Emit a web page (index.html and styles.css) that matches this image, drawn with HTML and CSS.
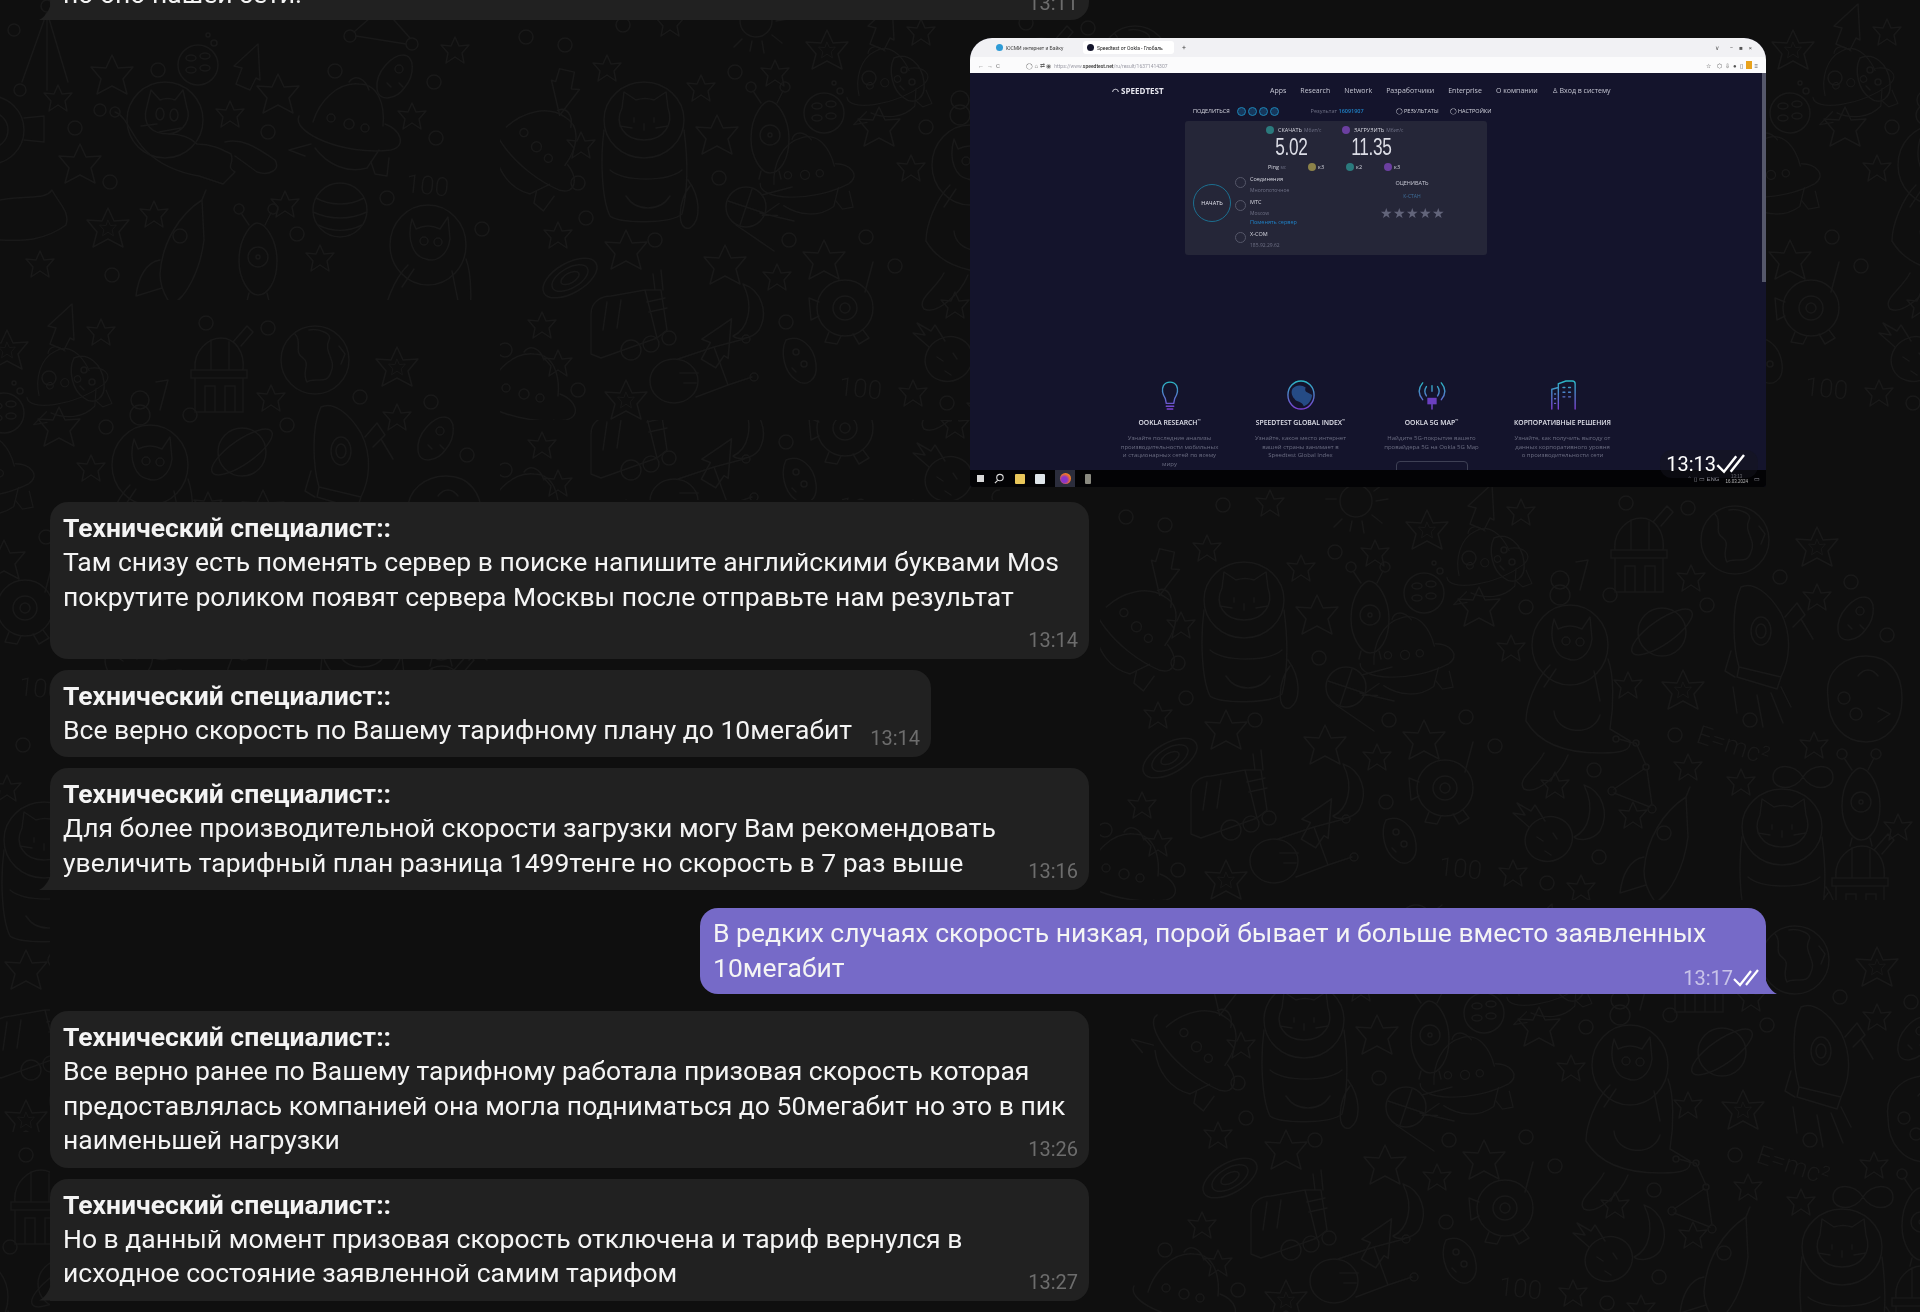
FILE: index.html
```html
<!DOCTYPE html>
<html lang="ru">
<head>
<meta charset="utf-8">
<title>Чат</title>
<link rel="stylesheet" href="styles.css">
</head>
<body>
<svg class="wall" width="1920" height="1312" aria-hidden="true">
  <defs>
    <path id="st" d="M0-20 6-7 21-8 11 4 15 19 0 11-15 19-11 4-21-8-6-7Z"/>
    <path id="st2" d="M0-13 4-4 14-5 7 3 9 13 0 7-9 13-7 3-14-5-4-4Z"/>
    <g id="st3"><use href="#st"/><use href="#st2" transform="scale(.6)"/></g>
    <g id="cat"><circle r="38"/><path d="M-18-14-14-30-5-20C0-22 5-22 10-20L18-30 22-12C26-2 20 12 4 14-12 14-24 6-18-14Z"/><ellipse cx="-5" cy="-6" rx="4" ry="6"/><ellipse cx="9" cy="-5" rx="4" ry="6"/><path d="M-24 6-8 4M-6 12 16 8M-50-8C-38-4-34 16-20 30-6 44 10 52 34 56L58 64 70 52C60 46 70 44 66 34 58 30 48 24 32 24 24 16 14 14 4 14M60 22C76 18 90 26 110 40 116 50 104 56 92 52L70 36"/><circle cx="-50" cy="-8" r="5"/></g>
    <g id="catf"><ellipse rx="40" ry="38"/><path d="M-22-12-20-28-8-20C-2-22 4-22 10-20L22-28 24-12C30 4 20 20 0 20-20 20-30 4-22-12Z"/><path d="M-10-2-10 2M10-2 10 2M0 4 0 10M-24 6-12 8M24 6 12 8"/><path d="M-40 10C-44 40-42 80-34 96-24 104 26 104 38 94 44 70 44 40 40 10M-34 50C-20 62 24 62 38 50M-18 76C-8 92 16 92 26 76M44 60C56 76 58 100 46 108 32 112 34 80 46 66"/></g>
    <g id="cats"><ellipse rx="38" ry="40"/><path d="M-16-26-12-16C-4-20 4-20 12-16L20-28 22-6C20 10 8 18-2 14-14 12-22-4-16-26Z"/><circle cx="-4" cy="-4" r="4"/><circle cx="10" cy="-3" r="4"/><path d="M-20 20C-34 34-44 60-44 76-30 100-2 108 30 108 50 108 62 106 60 96L40 84C44 60 44 30 38 14M-16 66C-14 90 24 92 30 70M-26 42-14 24M24 26 30 56"/><path d="M-2 110C-10 130-34 150-46 144-54 134-34 124-26 108"/></g>
    <g id="ufo"><path d="M-32-8C-26-28-8-48 14-46 34-46 40-24 38-4"/><path d="M-46-14C-54 2-2 26 46 20 62 16 56 0 40-6M-30 18C-18 34 2 44 22 38L34 20"/><path d="M4-48C10-56 20-52 24-40"/><circle cx="-14" cy="-12" r="4"/><circle cx="4" cy="-6" r="5"/><circle cx="20" cy="-2" r="4"/><path d="M-34 14-56 20-40 26M26 32 30 44 42 46 44 28"/></g>
    <g id="planet"><circle r="27"/><path d="M-24-12C-10-4 10-4 24-12M-27 2C-10 10 10 10 27 2M-22 15C-8 22 8 22 22 15"/></g>
    <g id="rocket"><path d="M32-60C10-46-8-18-10 14-10 28-4 38 2 46 16 36 30 12 34-20ZM-10 0C-24 2-32 18-34 36L-8 28M2 46 12 36"/><circle cx="10" cy="-24" r="7"/><path d="M32-60 36-70"/></g>
    <g id="rocket2"><path d="M-18-50C-28-30-26 10-20 30L22 40C30 24 34 0 22-24 10-44-6-56-18-50ZM-20 30-22 40 18 52 22 40"/><ellipse cx="2" cy="-6" rx="10" ry="14"/><ellipse cx="2" cy="-6" rx="5" ry="7"/><path d="M26-20 38-34 46-22 34-10M42-18 54 2M-28 14-34 34-24 40M-26 50-22 76M-2 58 4 90M12 56 24 86M22 50 32 70"/></g>
    <g id="alien"><path d="M-16 6C-16-20-2-32 2-32 10-32 22-16 22 6 22 28 12 40 3 40-6 40-16 24-16 6Z"/><circle cx="3" cy="2" r="10"/><circle cx="3" cy="2" r="2"/><path d="M-6-30-14-42M10-30 16-42"/><circle cx="-16" cy="-46" r="5"/><circle cx="18" cy="-46" r="5"/><path d="M-6 38-8 46M12 38 14 46"/></g>
    <g id="tri"><path d="M-3-38-28 32M-3-38 18 32M-3-38-3 40"/><circle cx="-3" cy="-44" r="6"/><path d="M2-42 20-32 30-36 26-46 14-46"/></g>
    <g id="moon"><circle r="20"/><ellipse cx="-7" cy="-7" rx="5" ry="3"/><ellipse cx="7" cy="-9" rx="5" ry="3"/><ellipse cx="-7" cy="5" rx="5" ry="3"/><ellipse cx="7" cy="3" rx="5" ry="3"/><circle cx="16" cy="-22" r="3"/><circle cx="10" cy="-30" r="2"/></g>
    <g id="plane"><path d="M10-26-14-4-6-2-12 14 2 20 8 8 12 10Z"/></g>
    <g id="saturn"><circle r="24"/><ellipse rx="36" ry="12" transform="rotate(-35)"/></g>
    <g id="earth"><circle r="34"/><path d="M-20-26C-12-18-22-8-12-2-4 4-14 12-8 22 0 16 12 26 16 12 22 0 8-8 14-20 18-26 4-32-6-30M24-14 30-6 26 4"/></g>
    <g id="obs"><path d="M-24-2C-26-22-10-34 2-34 16-34 26-20 24-2ZM-28-2H28V6H-28ZM-24 6V40H24V6M-14 14H-4V40H-14ZM6 14H16V40H6ZM-8-32V-2M10-30V-2M14-30 28-46 34-40 22-26"/></g>
    <g id="sun"><circle cy="-6" r="16"/><path d="M-14 12-22 20M-4 14-6 24M6 14 8 26M16 8 26 16M20-6 32-8M18-16 26-22M-20-8-30-8"/></g>
    <g id="gal"><ellipse rx="30" ry="15" transform="rotate(-30)"/><ellipse rx="20" ry="10" transform="rotate(-30)"/><ellipse rx="10" ry="5" transform="rotate(-30)"/></g>
    <g id="rover"><path d="M-40 34V-6C-40-18-30-24-20-24L14-30 26 18-30 38ZM14-30 30-30 36 10 26 18M16-18 34-22M18-8 36-12M24-30 22-46M32-30 30-50"/><circle cx="0" cy="30" r="10"/><circle cx="20" cy="24" r="8"/><circle cx="38" cy="18" r="7"/><path d="M-24-18-28 10M-10-20-14 8"/></g>
    <g id="cres"><path d="M-8-28C10-22 18 0 8 18 0 28-14 28-18 24-4 18 4-4-8-28Z"/></g>
    <g id="con"><circle cx="-28" cy="-18" r="3"/><circle cx="-8" cy="-14" r="3"/><circle cx="2" cy="10" r="3"/><circle cx="-32" cy="34" r="4"/><circle cx="8" cy="52" r="4"/><path d="M-25-18-11-14-8-14 2 8M0 12-30 32M-30 36 6 50M3 13 8 48"/></g>
    <g id="sat"><circle r="20"/><path d="M-18-6 18 6M6-18-6 18M16-12 46-20M14 6 48 14M-10 18 28 44"/></g>
    <g id="eye"><circle r="28"/><circle r="12"/><circle r="5"/><path d="M20-16 28-46M-26-6-36-10-34 12-26 8M-16 24-20 34-8 36-4 28M8 26 14 36 24 30 18 22"/></g>
    <g id="pot"><path d="M-14-20C0-26 14-14 16 4 18 20 6 28-4 20-16 12-20-8-14-20Z"/><circle cx="-4" cy="-8" r="3"/><circle cx="4" cy="4" r="3"/><path d="M-8 8-4 12"/></g>
    <g id="comet"><ellipse cx="8" cy="6" rx="24" ry="22" transform="rotate(-25)"/><path d="M-10-10-26-24-14-22-22-34-8-26-4-32 6-16M-2 0 4 4M14-4 18 2M6 14 12 18"/></g>
    <g id="inf"><path d="M0 0C-8-14-30-14-30 0-30 14-8 14 0 0 8-14 30-14 30 0 30 14 8 14 0 0Z"/></g>
    <g id="tel"><ellipse cx="-30" cy="8" rx="24" ry="22"/><path d="M-26-14 10-26 24 12-8 24M-24 0-6 0M-20 10-8 10M10-26 40-34M24 12 48 4"/><circle cx="42" cy="-34" r="4"/><circle cx="50" cy="4" r="4"/></g>
    <g id="face"><path d="M-36 0C-40-30-16-42 2-42 26-42 38-24 38 0 38 30 20 44 2 44-20 44-36 26-36 0Z"/><circle cx="-20" cy="0" r="6"/><circle cx="-8" cy="16" r="6"/><path d="M-6-22C0-30 8-30 14-22M14 10 26 16 14 24"/></g>
    <g id="bug"><path d="M-18 14C-20-4-2-20 8-20 20-20 20 0 10 12 2 24-16 28-18 14Z"/><circle cx="4" cy="-6" r="4"/><path d="M-8 8-4 12M4 8 8 12"/></g>
    <g id="net"><circle cx="-30" cy="-6" r="6"/><circle cx="32" cy="2" r="6"/><circle cx="2" cy="-34" r="4"/><path d="M-24-6 26 2M-26-10-2-31M6-31 30-4"/></g>

    <g id="fieldA" class="ink">
      <use href="#cat" x="165" y="120"/><use href="#ufo" x="345" y="130"/><use href="#planet" x="340" y="210"/>
      <use href="#rocket" x="170" y="260"/><use href="#alien" x="255" y="255"/><use href="#tri" x="50" y="50"/>
      <use href="#moon" x="198" y="65"/><use href="#plane" x="248" y="70"/><use href="#net" x="380" y="42"/>
      <use href="#bug" x="395" y="75"/><use href="#cats" x="428" y="245"/>
      <use href="#st" x="112" y="75"/><use href="#st2" x="58" y="98"/><use href="#st" x="278" y="94"/><use href="#st2" x="230" y="114"/>
      <use href="#st" x="80" y="164"/><use href="#st3" x="108" y="228"/><use href="#st2" x="154" y="214"/><use href="#st2" x="285" y="204"/>
      <use href="#st2" x="412" y="116"/><use href="#st2" x="40" y="264"/><use href="#st2" x="320" y="258"/><use href="#st2" x="455" y="50"/>
      <circle cx="14" cy="30" r="6"/><circle cx="158" cy="70" r="7"/><circle cx="335" cy="71" r="7"/><circle cx="20" cy="90" r="6"/><circle cx="100" cy="110" r="6"/><circle cx="75" cy="128" r="7"/><circle cx="268" cy="132" r="7"/><circle cx="110" cy="182" r="7"/><circle cx="436" cy="138" r="7"/><circle cx="387" cy="198" r="7"/><circle cx="297" cy="234" r="7"/><circle cx="482" cy="229" r="7"/><circle cx="112" cy="275" r="7"/><circle cx="434" cy="82" r="7"/>
      <g transform="translate(-10 130)"><circle r="34"/><circle r="18"/><path d="M34-12 54-14V12L34 10"/></g>
      <path d="M0 200C30 195 45 200 52 190 60 205 70 212 66 225 40 244 14 240 0 240"/>
      <text class="glyph" x="405" y="192" transform="rotate(6 405 192)">100</text>
    </g>

    <g id="fieldB" class="ink">
      <use href="#catf" x="144" y="120"/><use href="#cats" x="470" y="165"/>
      <use href="#ufo" x="30" y="150" transform="rotate(30 30 150)"/><use href="#ufo" x="471" y="50" transform="rotate(-30 471 50) scale(.8)"/><use href="#ufo" x="342" y="187" transform="rotate(-20 342 187) scale(.9)"/>
      <use href="#alien" x="267" y="133"/><use href="#moon" x="324" y="113"/><use href="#pot" x="408" y="78"/><use href="#bug" x="756" y="137"/>
      <g transform="translate(460 100)"><circle r="9"/><circle cy="15" r="10"/><path d="M16-18 28-20 20 10"/></g>
      <use href="#plane" x="382" y="30"/><use href="#plane" x="65" y="88" transform="rotate(170 65 88)"/><use href="#plane" x="800" y="90" transform="rotate(60 800 90) scale(1.4)"/><use href="#plane" x="201" y="312" transform="rotate(8 201 312) scale(1.1)"/>
      <use href="#sun" x="256" y="27"/><use href="#sat" x="246" y="207"/><use href="#gal" x="70" y="278"/><use href="#rover" x="131" y="320"/>
      <use href="#eye" x="345" y="308"/><use href="#cres" x="251" y="312"/><use href="#cres" x="492" y="333"/>
      <use href="#con" x="544" y="277"/><use href="#saturn" x="562" y="152"/><use href="#rocket2" x="659" y="157"/><use href="#earth" x="635" y="60"/><use href="#obs" x="539" y="72"/>
      <use href="#face" x="764" y="218"/><use href="#inf" x="703" y="297"/><use href="#alien" x="758" y="320"/><use href="#catf" x="682" y="347"/>
      <use href="#rocket" x="554" y="377"/><use href="#comet" x="439" y="357"/><use href="#pot" x="300" y="360"/><use href="#tel" x="204" y="373"/>
      <use href="#obs" x="760" y="400"/><use href="#ufo" x="20" y="400"/>
      <text class="glyph" x="338" y="395" transform="rotate(6 338 395)">100</text>
      <text class="glyph" x="595" y="262" transform="rotate(18 595 262)">E=mc²</text>
      <use href="#st2" x="107" y="68"/><use href="#st2" x="170" y="23"/><use href="#st2" x="201" y="88"/><use href="#st" x="217" y="135"/><use href="#st2" x="81" y="145"/><use href="#st2" x="275" y="73"/><use href="#st3" x="327" y="50"/><use href="#st" x="379" y="127"/><use href="#st2" x="421" y="32"/><use href="#st2" x="411" y="168"/><use href="#st2" x="591" y="98"/><use href="#st3" x="717" y="67"/><use href="#st2" x="717" y="117"/><use href="#st2" x="528" y="205"/><use href="#st3" x="583" y="210"/><use href="#st2" x="714" y="265"/><use href="#st2" x="588" y="287"/><use href="#st2" x="641" y="302"/><use href="#st2" x="455" y="305"/><use href="#st" x="324" y="260"/><use href="#st" x="225" y="265"/><use href="#st2" x="277" y="277"/><use href="#st" x="126" y="250"/><use href="#st2" x="58" y="235"/><use href="#st2" x="42" y="325"/><use href="#st2" x="58" y="363"/><use href="#st2" x="533" y="335"/><use href="#st2" x="798" y="347"/><use href="#st2" x="413" y="393"/><use href="#st3" x="126" y="400"/><use href="#st2" x="481" y="408"/>
      <circle cx="123" cy="25" r="7"/><circle cx="26" cy="37" r="7"/><circle cx="65" cy="45" r="7"/><circle cx="235" cy="72" r="7"/><circle cx="369" cy="78" r="7"/><circle cx="526" cy="23" r="7"/><circle cx="588" cy="28" r="7"/><circle cx="680" cy="97" r="7"/><circle cx="751" cy="102" r="7"/><circle cx="510" cy="115" r="7"/><circle cx="426" cy="127" r="7"/><circle cx="607" cy="125" r="7"/><circle cx="787" cy="155" r="7"/><circle cx="219" cy="178" r="7"/><circle cx="78" cy="183" r="7"/><circle cx="86" cy="218" r="7"/><circle cx="366" cy="237" r="7"/><circle cx="155" cy="240" r="7"/><circle cx="289" cy="240" r="7"/><circle cx="650" cy="240" r="7"/><circle cx="575" cy="255" r="7"/><circle cx="395" cy="266" r="7"/><circle cx="494" cy="290" r="7"/><circle cx="286" cy="322" r="7"/><circle cx="5" cy="350" r="7"/><circle cx="78" cy="390" r="7"/><circle cx="499" cy="377" r="7"/><circle cx="447" cy="403" r="7"/>
    </g>
  </defs>
  <rect class="wall-fill" width="1920" height="1312"/>
  <svg x="0" y="0" width="500" height="300" viewBox="0 0 500 300"><use href="#fieldA"/></svg>
  <svg x="500" y="0" width="820" height="420" viewBox="0 0 820 420"><use href="#fieldB"/></svg>
  <svg x="0" y="300" width="500" height="420" viewBox="320 0 500 420"><use href="#fieldB"/></svg>
  <svg x="500" y="420" width="500" height="80" viewBox="0 300 500 80"><use href="#fieldB"/></svg>
  <svg x="1766" y="0" width="154" height="490" viewBox="300 0 154 490"><use href="#fieldB"/></svg>
  <svg x="1100" y="480" width="820" height="420" viewBox="0 0 820 420"><use href="#fieldB"/></svg>
  <svg x="1090" y="900" width="830" height="412" viewBox="-70 0 830 412"><use href="#fieldB"/></svg>
  <svg x="0" y="720" width="50" height="412" viewBox="100 0 50 412"><use href="#fieldB"/></svg>
  <svg x="0" y="1132" width="50" height="180" viewBox="500 0 50 180"><use href="#fieldB"/></svg>
</svg>

<main class="chat">
  <div class="msg in stub tail"><p class="text">но оно нашей сети.</p><time class="stamp">13:11</time></div>

  <figure class="shot">
    <div class="shot-pic">
      <header class="tabs">
        <span class="tab"><i class="fav fav-blue"></i>ЮСМИ интернет и Байку</span>
        <span class="tab tab-on"><i class="fav fav-dark"></i>Speedtest от Ookla - Глобаль</span>
        <span class="tab-plus">+</span>
        <span class="winbtns">∨&nbsp;&nbsp;&nbsp;&nbsp;&nbsp;&nbsp;&nbsp;−&nbsp;&nbsp;&nbsp;&nbsp;■&nbsp;&nbsp;&nbsp;&nbsp;×</span>
      </header>
      <div class="urlbar">
        <span class="navbtns">←&nbsp;&nbsp;→&nbsp;&nbsp;C</span>
        <span class="url"><span class="url-ico">◯ ⌂ ⇄ ◉</span> https://www.<b>speedtest.net</b>/ru/result/16371414307</span>
        <span class="tools">☆&nbsp;&nbsp;&nbsp;&nbsp;⬡&nbsp;&nbsp;⇩&nbsp;&nbsp;●&nbsp;&nbsp;▯&nbsp;&nbsp;<i class="ext"></i>&nbsp;&nbsp;≡</span>
      </div>
      <section class="page">
        <div class="scrollbar"></div>
        <nav class="st-nav">
          <span class="st-logo">◠ SPEEDTEST</span>
          <span class="st-links"><span>Apps</span><span>Research</span><span>Network</span><span>Разработчики</span><span>Enterprise</span><span>О компании</span><span>♙ Вход в систему</span></span>
        </nav>
        <div class="st-share">
          <span class="share-l">ПОДЕЛИТЬСЯ</span>
          <i class="dot-b"></i><i class="dot-b"></i><i class="dot-b"></i><i class="dot-b"></i>
          <span class="share-r">Результат <b>16091907</b></span>
          <span class="share-t">◯ РЕЗУЛЬТАТЫ</span>
          <span class="share-t">◯ НАСТРОЙКИ</span>
        </div>
        <div class="card">
          <div class="speeds">
            <div class="speed"><div class="sp-head"><i class="disc disc-teal"></i>СКАЧАТЬ <small>Мбит/с</small></div><div class="sp-val">5.02</div></div>
            <div class="speed"><div class="sp-head"><i class="disc disc-purple"></i>ЗАГРУЗИТЬ <small>Мбит/с</small></div><div class="sp-val">11.35</div></div>
          </div>
          <div class="ping"><span>Ping <small>мс</small></span><span><i class="disc disc-gold"></i>к3</span><span><i class="disc disc-teal"></i>к2</span><span><i class="disc disc-purple"></i>к3</span></div>
          <div class="card-low">
            <div class="go">НАЧАТЬ</div>
            <div class="links">
              <div class="link-row"><i class="ring"></i><div><b>Соединения</b><small>Многопоточное</small></div></div>
              <div class="link-row"><i class="ring"></i><div><b>МТС</b><small>Moscow</small><em>Поменять сервер</em></div></div>
              <div class="link-row"><i class="ring"></i><div><b>X-COM</b><small>185.92.29.62</small></div></div>
            </div>
            <div class="rate">
              <b>ОЦЕНИВАТЬ</b><small>К-СТАН</small>
              <span class="stars">★★★★★</span>
            </div>
          </div>
        </div>
        <div class="features">
          <article class="feat">
            <svg class="feat-ico" viewBox="0 0 30 32"><defs><linearGradient id="gr" x1="0" y1="0" x2="0" y2="1"><stop offset="0" stop-color="#2bb6c4"/><stop offset="1" stop-color="#7b3fd0"/></linearGradient></defs><path class="grad" d="M10 20C7 15 6 10 8 6 11 1 19 1 22 6 24 10 23 15 20 20L19 25H11ZM11 28H19M12 31H18"/></svg>
            <h3>OOKLA RESEARCH<sup>™</sup></h3>
            <p>Узнайте последние анализы производительности мобильных и стационарных сетей по всему миру</p>
          </article>
          <article class="feat">
            <svg class="feat-ico" viewBox="0 0 30 32"><ellipse class="grad" cx="15" cy="16" rx="14" ry="15"/><path class="globe" d="M6 9C10 5 16 5 20 8 18 13 22 13 27 16 26 24 21 27 18 28 16 22 10 24 8 20 5 17 4 12 6 9Z"/></svg>
            <h3>SPEEDTEST GLOBAL INDEX<sup>™</sup></h3>
            <p>Узнайте, какое место интернет вашей страны занимает в Speedtest Global Index</p>
            <span class="feat-btn"></span>
          </article>
          <article class="feat">
            <svg class="feat-ico" viewBox="0 0 30 32"><path class="grad" d="M5 3C0 9 0 15 5 21M25 3C30 9 30 15 25 21M9 7C7 10 7 14 9 17M21 7C23 10 23 14 21 17M15 6V12M15 26V31"/><rect class="five" x="10" y="19" width="10" height="7"/></svg>
            <h3>OOKLA 5G MAP<sup>™</sup></h3>
            <p>Найдите 5G-покрытие вашего провайдера 5G на Ookla 5G Map</p>
            <span class="feat-btn"></span>
          </article>
          <article class="feat">
            <svg class="feat-ico" viewBox="0 0 30 32"><path class="grad" d="M3 31V10L10 8V31M10 31V4L18 1H25C27 1 28 2 28 4V31M15 8H17M21 8H23M15 13H17M21 13H23M15 18H17M21 18H23M6 15H7M6 20H7M6 25H7"/></svg>
            <h3>КОРПОРАТИВНЫЕ РЕШЕНИЯ</h3>
            <p>Узнайте, как получить выгоду от данных корпоративного уровня о производительности сети</p>
            <span class="feat-btn"></span>
          </article>
        </div>
      </section>
      <footer class="taskbar">
        <span class="win"></span>
        <svg class="tb-ico" viewBox="0 0 12 12"><circle class="tb-line" cx="6.5" cy="5" r="3.5"/><path class="tb-line" d="M4 8 1 11"/></svg>
        <span class="tb-app tb-yellow"></span>
        <span class="tb-app tb-white"></span>
        <span class="tb-fox"><i></i></span>
        <span class="tb-app tb-grey"></span>
        <span class="tray">⌃ ▯ ▭ ENG <small>13:13<br>16.03.2024</small> ▭</span>
      </footer>
    </div>
    <figcaption class="badge">13:13<svg class="checks" viewBox="0 0 32 18"><path d="M1 10 7 16 18 2M13 16 25 1"/></svg></figcaption>
  </figure>

  <div class="msg in w-full"><p class="name">Технический специалист::</p><p class="text">Там снизу есть поменять сервер в поиске напишите английскими буквами Mos<br>покрутите роликом появят сервера Москвы после отправьте нам результат<br>&nbsp;</p><time class="stamp">13:14</time></div>

  <div class="msg in w-short gap-s"><p class="name">Технический специалист::</p><p class="text">Все верно скорость по Вашему тарифному плану до 10мегабит</p><time class="stamp">13:14</time></div>

  <div class="msg in w-full tail gap-s"><p class="name">Технический специалист::</p><p class="text">Для более производительной скорости загрузки могу Вам рекомендовать<br>увеличить тарифный план разница 1499тенге но скорость в 7 раз выше</p><time class="stamp">13:16</time></div>

  <div class="msg out"><p class="text">В редких случаях скорость низкая, порой бывает и больше вместо заявленных<br>10мегабит</p><time class="stamp">13:17<svg class="checks checks-s" viewBox="0 0 32 18"><path d="M1 10 7 16 18 2M13 16 25 1"/></svg></time></div>

  <div class="msg in w-full gap-l"><p class="name">Технический специалист::</p><p class="text">Все верно ранее по Вашему тарифному работала призовая скорость которая<br>предоставлялась компанией она могла подниматься до 50мегабит но это в пик<br>наименьшей нагрузки</p><time class="stamp">13:26</time></div>

  <div class="msg in w-full tail gap-s"><p class="name">Технический специалист::</p><p class="text">Но в данный момент призовая скорость отключена и тариф вернулся в<br>исходное состояние заявленной самим тарифом</p><time class="stamp">13:27</time></div>
</main>
</body>
</html>
```
FILE: styles.css
```css
* { box-sizing: border-box; margin: 0; padding: 0; }
html, body { width: 1920px; height: 1312px; overflow: hidden; background: #0f0f0f; }
body { font-family: Roboto, "Liberation Sans", sans-serif; color: #fff; position: relative; }

/* wallpaper */
.wall { position: absolute; left: 0; top: 0; filter: blur(.4px); }
.wall-fill { fill: #0f0f0f; }
.ink { fill: none; stroke: #191919; stroke-width: 1.5; stroke-linejoin: round; stroke-linecap: round; }
.glyph { font-family: Roboto, sans-serif; font-size: 26px; font-weight: 300; fill: #191919; stroke: none; }

/* chat column */
.chat { position: relative; display: flex; flex-direction: column; height: 1312px; padding: 0 154px 0 50px; }
.msg { position: relative; flex: none; padding: 8px 13px 10px; border-radius: 18px; font-size: 26.5px; line-height: 34.5px; color: #f4f4f4; }
.msg p { filter: blur(.35px); }
.in { background: #212121; align-self: flex-start; }
.w-full { width: 1039px; }
.w-short { width: 881px; }
.gap-s { margin-top: 11px; }
.gap-l { margin-top: 17px; }
.name { font-weight: 700; line-height: 35px; }
.stamp { position: absolute; right: 11px; bottom: 7px; font-size: 20px; line-height: 24px; color: #6d6d6d; display: flex; align-items: center; filter: blur(.35px); }

/* message tails */
.tail { border-bottom-left-radius: 0; }
.tail::before { content: ""; position: absolute; left: -11px; bottom: 0; width: 12px; height: 20px; background: #212121; clip-path: path("M12 0C12 9 6 17 0 20H12Z"); }

.stub { width: 1039px; height: 20px; padding: 0 13px 9px; display: flex; flex-direction: column; justify-content: flex-end; border-top-left-radius: 0; border-top-right-radius: 0; }
.stub .stamp { bottom: 5px; }

.out { background: #766ac8; align-self: flex-end; width: 1066px; margin-top: 18px; border-bottom-right-radius: 0; line-height: 35px; padding: 7px 13px 9px; }
.out::after { content: ""; position: absolute; right: -11px; bottom: 0; width: 12px; height: 20px; background: #766ac8; clip-path: path("M0 0C0 9 6 17 12 20H0Z"); }
.out .stamp { color: rgba(255,255,255,.6); right: 5px; bottom: 4px; }
.checks { fill: none; stroke: #fff; stroke-width: 2.2; width: 36px; height: 20px; }
.checks-s { width: 32px; height: 18px; margin-right: -4px; }
.out + .in { margin-top: 17px; }

/* screenshot */
.shot { position: relative; flex: none; width: 796px; height: 449px; margin: 18px 0 15px; align-self: flex-end; }
.shot-pic { width: 100%; height: 100%; display: flex; flex-direction: column; border-radius: 22px 22px 3px 3px; overflow: hidden; filter: blur(.65px); background: #14142c; }
.tabs { flex: none; height: 19px; background: #f1f1f4; display: flex; align-items: center; padding: 0 14px 0 22px; font-size: 5px; color: #444; }
.tab { display: flex; align-items: center; gap: 3px; width: 91px; height: 13px; padding: 0 4px; white-space: nowrap; overflow: hidden; }
.tab-on { background: #fff; border-radius: 3px; color: #222; }
.fav { width: 7px; height: 7px; border-radius: 50%; flex: none; }
.fav-blue { background: #2e9bd6; }
.fav-dark { background: #14152c; }
.tab-plus { margin-left: 8px; font-size: 7px; }
.winbtns { margin-left: auto; color: #555; font-size: 6px; }
.urlbar { flex: none; height: 16px; background: #fbfbfc; display: flex; align-items: center; padding: 0 8px; font-size: 6px; color: #777; }
.navbtns { width: 48px; font-size: 6px; }
.url { flex: 1; color: #9a9aa5; font-size: 5px; }
.url b { color: #333; font-weight: 500; }
.url-ico { color: #666; font-size: 6px; margin-right: 2px; }
.tools { color: #555; display: flex; align-items: center; }
.ext { display: inline-block; width: 6px; height: 8px; background: #e8a21c; }

.page { flex: 1; min-height: 0; position: relative; overflow: hidden; display: flex; flex-direction: column; background: #14142c; font-family: "Open Sans", "Liberation Sans", sans-serif; color: #d5d6df; }
.scrollbar { position: absolute; right: 0; top: 0; width: 4px; height: 209px; background: #55576a; }
.st-nav { flex: none; display: flex; align-items: center; height: 14px; margin-top: 10px; padding-left: 142px; }
.st-logo { font-size: 8px; font-weight: 700; width: 158px; color: #e6e6ee; white-space: nowrap; }
.st-links { display: flex; gap: 14px; font-size: 7px; color: #c5c6d2; white-space: nowrap; }
.st-share { flex: none; display: flex; align-items: center; height: 12px; margin-top: 8px; padding-left: 223px; font-size: 5.5px; white-space: nowrap; }
.share-l { margin-right: 7px; }
.dot-b { width: 9px; height: 9px; border-radius: 50%; border: 1px solid #1d84b5; background: #16365a; margin-right: 2px; }
.share-r { margin-left: 30px; width: 85px; color: #6e7085; }
.share-r b { color: #1f82c7; font-weight: 600; }
.share-t { width: 54px; }

.card { flex: none; width: 302px; height: 134px; margin: 4px 0 0 215px; background: #252638; border-radius: 3px; padding: 4px 4px 0 8px; font-size: 5.5px; }
.speeds { display: flex; height: 34px; padding-left: 73px; gap: 26px; }
.speed { width: 50px; }
.sp-head { display: flex; align-items: center; gap: 2px; white-space: nowrap; height: 10px; }
.sp-head small { color: #6e7085; font-size: 5px; }
.sp-val { font-family: "Liberation Sans", sans-serif; font-size: 24px; line-height: 24px; transform: scaleX(.72); transform-origin: 18px 50%; font-weight: 400; color: #dcdde6; padding-left: 6px; letter-spacing: -.5px; }
.disc { display: inline-block; width: 8px; height: 8px; border-radius: 50%; margin-right: 2px; vertical-align: -2px; flex: none; }
.disc-teal { background: #2b7a7d; }
.disc-purple { background: #6b3fa0; }
.disc-gold { background: #8c8249; }
.ping { display: flex; height: 11px; margin-top: 2px; padding-left: 75px; gap: 22px; align-items: center; }
.ping small { color: #6e7085; }
.card-low { display: flex; margin-top: 3px; }
.go { width: 38px; height: 38px; border: 1.5px solid #1c6f90; border-radius: 50%; margin-top: 9px; display: flex; align-items: center; justify-content: center; font-size: 5.5px; color: #e4e4ee; flex: none; }
.links { width: 130px; margin-left: 4px; }
.link-row { display: flex; gap: 4px; margin-bottom: 3px; }
.link-row b, .link-row small, .link-row em { display: block; line-height: 9px; font-weight: 400; font-style: normal; white-space: nowrap; }
.link-row small { color: #6e7085; font-size: 5px; margin-top: 2px; }
.link-row em { color: #1f82c7; font-size: 5.5px; }
.ring { width: 11px; height: 11px; border-radius: 50%; border: 1px solid #555769; margin-top: 2px; flex: none; }
.rate { flex: 1; display: flex; flex-direction: column; align-items: center; padding-top: 4px; padding-right: 24px; }
.rate b { font-weight: 400; color: #c9cad6; }
.rate small { color: #3f6f9b; font-size: 5px; margin-top: 6px; }
.stars { color: #62647a; font-size: 13.5px; line-height: 14px; margin-top: 7px; white-space: nowrap; }

.features { margin-top: auto; flex: none; height: 90px; overflow: hidden; display: grid; grid-template-columns: repeat(4, 131px); padding-left: 134px; }
.feat { display: flex; flex-direction: column; align-items: center; text-align: center; }
.feat-ico { width: 28px; height: 30px; flex: none; }
.grad { fill: none; stroke: url(#gr); stroke-width: 1.5; stroke-linecap: round; }
.globe { fill: #254b85; stroke: none; }
.five { fill: #6b3fc0; }
.feat h3 { margin-top: 9px; font-size: 6.8px; line-height: 8px; font-weight: 600; color: #e0e1ea; white-space: nowrap; }
.feat h3 sup { font-size: 4px; line-height: 0; }
.feat p { margin-top: 7px; width: 98px; font-size: 6px; line-height: 8.5px; color: #6b6d82; }
.feat-btn { flex: none; width: 72px; height: 16px; border: 1px solid #3e4054; border-radius: 4px; margin-top: 10px; }

.taskbar { flex: none; height: 17px; background: #030305; display: flex; align-items: center; padding-left: 7px; gap: 10px; }
.win { width: 7px; height: 7px; background: #d8d8d8; }
.tb-ico { width: 11px; height: 11px; }
.tb-line { fill: none; stroke: #ddd; stroke-width: 1.2; }
.tb-app { width: 10px; height: 10px; border-radius: 1px; }
.tb-yellow { background: #e9c75a; }
.tb-white { background: #dfe6ea; }
.tb-grey { background: #8a8a80; width: 6px; }
.tb-fox { width: 20px; height: 17px; background: #2b2d3c; display: flex; align-items: center; justify-content: center; }
.tb-fox i { width: 11px; height: 11px; border-radius: 50%; background: radial-gradient(circle at 40% 60%, #8a35c9 0 30%, #f0702a 60%, #f5b032); }
.tray { margin-left: auto; padding-right: 6px; font-size: 6px; color: #9a9aa5; font-family: "Liberation Sans", sans-serif; display: flex; align-items: center; gap: 6px; white-space: nowrap; }
.tray small { font-size: 4.5px; line-height: 5px; text-align: center; color: #bbb; }

.badge { position: absolute; right: 8px; bottom: 9px; height: 28px; padding: 0 6px 0 6px; display: flex; align-items: center; gap: 0; border-radius: 12px; background: rgba(20,20,30,.5); font-size: 20px; color: #fff; filter: blur(.4px); }
```
